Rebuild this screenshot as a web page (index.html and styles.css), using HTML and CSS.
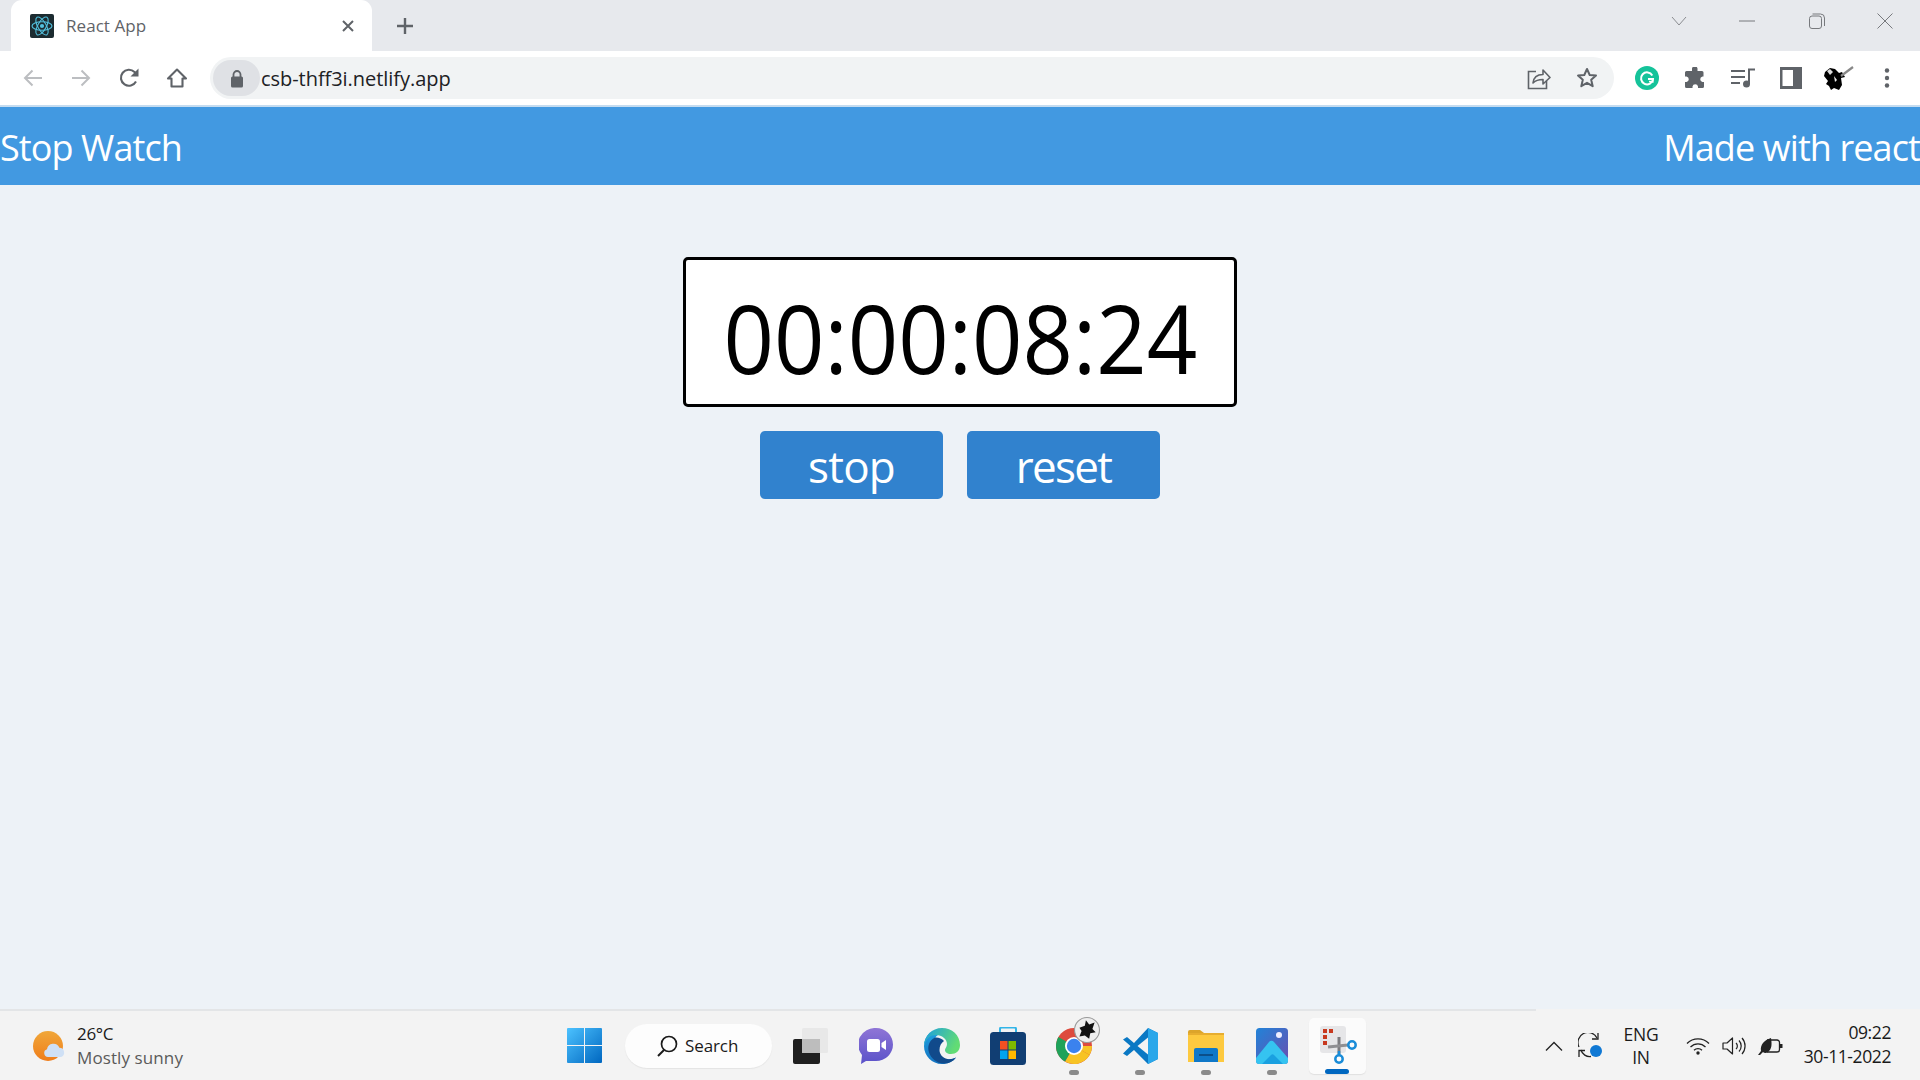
FILE: index.html
```html
<!DOCTYPE html>
<html lang="en">
<head>
<meta charset="utf-8">
<title>React App</title>
<link rel="stylesheet" href="styles.css">
</head>
<body>
<div class="screen">
  <div class="tabstrip">
    <div class="tab">
      <svg class="favicon" viewBox="0 0 24 24"><rect width="24" height="24" rx="2" fill="#1c2b30"/><g fill="none" stroke="#53c1de" stroke-width="1.1"><ellipse cx="12" cy="12" rx="10" ry="4.2"/><ellipse cx="12" cy="12" rx="10" ry="4.2" transform="rotate(60 12 12)"/><ellipse cx="12" cy="12" rx="10" ry="4.2" transform="rotate(120 12 12)"/></g><circle cx="12" cy="12" r="2.1" fill="#53c1de"/></svg>
      <span class="tab-title">React App</span>
      <svg class="tab-close" viewBox="0 0 14 14"><path d="M2 2l10 10M12 2L2 12" stroke="#5f6368" stroke-width="2" fill="none"/></svg>
    </div>
    <div class="new-tab"><svg width="20" height="20" viewBox="0 0 20 20"><path d="M10 2v16M2 10h16" stroke="#5f6368" stroke-width="2.4"/></svg></div>
    <div class="window-controls">
      <div class="win-btn"><svg width="16" height="10" viewBox="0 0 16 10"><path d="M1 1l7 8 7-8" stroke="#8a8c90" fill="none"/></svg></div>
      <div class="win-btn win-btn-min"><svg width="16" height="2" viewBox="0 0 16 2"><path d="M0 1h16" stroke="#77797d"/></svg></div>
      <div class="win-btn"><svg width="16" height="16" viewBox="0 0 16 16"><rect x=".5" y="3" width="12" height="12.5" rx="2.5" fill="none" stroke="#77797d"/><path d="M3.5 1h8a4 4 0 0 1 4 4v8" fill="none" stroke="#77797d"/></svg></div>
      <div class="win-btn"><svg width="16" height="16" viewBox="0 0 16 16"><path d="M.5.5l15 15M15.500.5l-15 15" stroke="#77797d"/></svg></div>
    </div>
  </div>

  <div class="toolbar">
    <div class="tool"><svg width="22" height="20" viewBox="0 0 22 20"><path d="M20 10H3M10.500 2.500L3 10l7.500 7.500" stroke="#bcbec1" stroke-width="2" fill="none"/></svg></div>
    <div class="tool"><svg width="22" height="20" viewBox="0 0 22 20"><path d="M2 10h17M11.500 2.500L19 10l-7.500 7.500" stroke="#bcbec1" stroke-width="2" fill="none"/></svg></div>
    <div class="tool"><svg width="22" height="22" viewBox="0 0 22 22"><path d="M18 14.500A8 8 0 1 1 16.500 5L19 7.500" stroke="#5f6368" stroke-width="2.100" fill="none"/><path d="M20.500 1.500v8h-8z" fill="#5f6368"/></svg></div>
    <div class="tool"><svg width="22" height="22" viewBox="0 0 22 22"><path d="M11 2.500L2 11.500h3.500v8h11v-8H20z" stroke="#5f6368" stroke-width="2.100" fill="none" stroke-linejoin="round"/></svg></div>
    <div class="omnibox">
      <div class="lock-pill"><svg width="14" height="19" viewBox="0 0 14 19"><path d="M3.500 8V5.500a3.500 3.500 0 0 1 7 0V8" stroke="#5f6368" stroke-width="1.800" fill="none"/><rect x="1" y="7.500" width="12" height="11" rx="1.500" fill="#5f6368"/></svg></div>
      <span class="url">csb-thff3i.netlify.app</span>
      <div class="tool omni-end"><svg width="24" height="24" viewBox="0 0 24 24"><path d="M9 5.500H1.500V22.500H19.500V15" stroke="#5f6368" stroke-width="1.600" fill="none"/><path d="M6 17c.500-5 4-8.500 10-8.500V4l7 7.500-7 6.500v-4.500c-4 0-7.500 1-10 3.500z" stroke="#5f6368" stroke-width="1.600" fill="none" stroke-linejoin="round"/></svg></div>
      <div class="tool"><svg width="22" height="22" viewBox="0 0 22 22"><path d="M11 2l2.700 6 6.300.600-4.800 4.200 1.500 6.400L11 15.800l-5.700 3.400 1.500-6.400L2 8.600 8.300 8z" stroke="#5f6368" stroke-width="2" fill="none" stroke-linejoin="round"/></svg></div>
    </div>
    <div class="tool ext-first"><svg width="24" height="24" viewBox="0 0 24 24"><circle cx="12" cy="12" r="12" fill="#15c39a"/><path d="M17.300 9.500A6 6 0 1 0 18 13h-5" stroke="#fff" stroke-width="2" fill="none"/><path d="M14 15.500l3.800.300.200-3.600" stroke="#fff" stroke-width="1.600" fill="none"/></svg></div>
    <div class="tool"><svg width="22" height="22" viewBox="0 0 22 22"><path d="M8 1.500a2.800 2.800 0 0 1 5.500 0V4h4.500a1.500 1.500 0 0 1 1.500 1.500V9.500h-1a2.800 2.800 0 0 0 0 5.500h1.500v4.500A1.500 1.500 0 0 1 18.500 21H14v-1.500a2.800 2.800 0 0 0-5.500 0V21H2.500A1.500 1.500 0 0 1 1 19.500V15h1.500a2.800 2.800 0 0 0 0-5.500H1V5.500A1.500 1.500 0 0 1 2.500 4H8z" fill="#5f6368"/></svg></div>
    <div class="tool"><svg width="24" height="20" viewBox="0 0 24 20"><path d="M0 3h14M0 9h14M0 15h9" stroke="#5f6368" stroke-width="2"/><path d="M18 16V1.500h6" stroke="#5f6368" stroke-width="2" fill="none"/><circle cx="15.500" cy="16" r="3.500" fill="#5f6368"/></svg></div>
    <div class="tool"><svg width="22" height="22" viewBox="0 0 22 22"><rect width="22" height="22" fill="#5f6368"/><rect x="2.500" y="3" width="10.500" height="16" fill="#fff"/></svg></div>
    <div class="tool"><svg width="30" height="26" viewBox="0 0 30 26"><path d="M1 7l5-4 5 1 4 4 3-1 3 5-4 1 1 7-3 5-5-2-3 2-2-4-3-2 2-3-4-5z" fill="#000"/><path d="M17 11l12-9" stroke="#888" stroke-width="2.200"/><path d="M3 6l3-2 3 3-3 3z" fill="#ddd"/><path d="M10 11l3 4-2 2z" fill="#eee"/></svg></div>
    <div class="tool"><svg width="6" height="20" viewBox="0 0 6 20"><circle cx="3" cy="2.500" r="2.200" fill="#5f6368"/><circle cx="3" cy="10" r="2.200" fill="#5f6368"/><circle cx="3" cy="17.500" r="2.200" fill="#5f6368"/></svg></div>
  </div>

  <header class="app-bar">
    <span>Stop Watch</span>
    <span>Made with react</span>
  </header>

  <main class="app-main">
    <div class="timer"><span class="timer-digits">00:00:08:24</span></div>
    <div class="actions">
      <button class="btn btn-stop">stop</button>
      <button class="btn btn-reset">reset</button>
    </div>
  </main>

  <footer class="taskbar">
    <div class="weather">
      <svg class="weather-icon" width="33" height="30" viewBox="0 0 33 30"><defs><linearGradient id="sun" x1="0" y1="0" x2="0" y2="1"><stop offset="0" stop-color="#f0a73a"/><stop offset="1" stop-color="#ef7d1a"/></linearGradient></defs><circle cx="15" cy="15" r="15" fill="url(#sun)"/><path d="M15 26a4 4 0 0 1-1-7.800 6.500 6.500 0 0 1 12.400-1.500A4.800 4.800 0 0 1 28 26z" fill="#cfe0f5"/></svg>
      <div class="weather-text"><span class="temp">26°C</span><span class="cond">Mostly sunny</span></div>
    </div>
    <svg class="start" width="35" height="35" viewBox="0 0 35 35"><defs><linearGradient id="win" x1="0" y1="0" x2="1" y2="1"><stop offset="0" stop-color="#4cc2ff"/><stop offset="1" stop-color="#0067c0"/></linearGradient></defs><path d="M1 0h16v17H0V1a1 1 0 0 1 1-1zM18 0h16a1 1 0 0 1 1 1v16H18zM0 18h17v17H1a1 1 0 0 1-1-1zM18 18h17v16a1 1 0 0 1-1 1H18z" fill="url(#win)"/></svg>
    <div class="search">
      <svg width="24" height="24" viewBox="0 0 24 24"><circle cx="14" cy="10" r="7.500" stroke="#1a1a1a" stroke-width="1.700" fill="none"/><path d="M9 16l-6 6" stroke="#1a1a1a" stroke-width="2"/></svg>
      <span>Search</span>
    </div>
    <div class="apps">
      <div class="app"><svg width="35" height="36" viewBox="0 0 35 36"><rect y="11" width="27" height="25" rx="2" fill="#1f1f1f"/><rect x="9" width="26" height="25" rx="1.500" fill="#e8e8e8"/><rect x="9" y="11" width="18" height="14" fill="#bdbdbd"/></svg></div>
      <div class="app"><svg width="34" height="36" viewBox="0 0 34 36"><defs><linearGradient id="teams" x1="0" y1="0" x2="0" y2="1"><stop offset="0" stop-color="#8f75d6"/><stop offset="1" stop-color="#5a52c9"/></linearGradient></defs><path d="M17 0a17 16.500 0 0 1 0 33H7l-5 3 1-9A17 16.500 0 0 1 17 0z" fill="url(#teams)"/><rect x="8" y="11" width="13" height="13" rx="2.500" fill="#fff"/><path d="M22.500 15l4.500-3v10l-4.500-3z" fill="#fff"/></svg></div>
      <div class="app"><svg width="36" height="36" viewBox="0 0 36 36"><defs><linearGradient id="edge1" x1="0" y1="0" x2="0" y2="1"><stop offset="0" stop-color="#1e9fe0"/><stop offset="1" stop-color="#1473c0"/></linearGradient><linearGradient id="edge2" x1="0" y1="0" x2="1" y2=".4"><stop offset="0" stop-color="#1b9de2"/><stop offset="1" stop-color="#62dc74"/></linearGradient></defs><path d="M6 4.500C2 8 0 13 0 18c0 10 8 18 18 18 6 0 11-2.500 14-6.500-8 4-17 1-20-5C9 18 9 10 14 7z" fill="url(#edge1)"/><path d="M0 18C0 8 8 0 18 0c10 0 18 7 18 17 0 6-4 9-9 9-4 0-6-2-6-4 0-2 2-3 2-6 0-5-5-9-11-9-5 0-10 3-12 11z" fill="url(#edge2)"/><path d="M11 9.500c-6 3-8 9-6 15 2 6 8 11 15 11 5 0 9-2 12-6-3 1.500-6 2-8.500 1.500-5-1-8-5-8-9 0-4 1.500-7 4.500-9-2-2.500-6-4-9-3.500z" fill="#114a8b"/></svg></div>
      <div class="app"><svg width="36" height="38" viewBox="0 0 36 38"><path d="M10 6V2a1.500 1.500 0 0 1 1.500-1.500h13A1.500 1.500 0 0 1 26 2v4" stroke="#33b5e8" stroke-width="2" fill="none"/><rect y="5" width="36" height="33" rx="3.500" fill="#113e73"/><rect x="10" y="14" width="7.500" height="8.500" fill="#f25022"/><rect x="18.500" y="14" width="7.500" height="8.500" fill="#7fba00"/><rect x="10" y="23.500" width="7.500" height="8.500" fill="#00a4ef"/><rect x="18.500" y="23.500" width="7.500" height="8.500" fill="#ffb900"/></svg></div>
      <div class="app app-open">
        <svg width="36" height="44" viewBox="0 0 36 44"><circle cx="18" cy="22" r="18" fill="#dd4b3e"/><path d="M18 22L33.600 31A18 18 0 0 1 9 37.600z" fill="#f7c325"/><path d="M18 22L9 37.600A18 18 0 0 1 2.400 13z" fill="#1fa25a"/><path d="M18 22H36A18 18 0 0 1 33.600 31z" fill="#f7c325"/><circle cx="18" cy="22" r="9" fill="#fff"/><circle cx="18" cy="22" r="7.200" fill="#3b82ee"/></svg>
        <svg class="chrome-badge" width="26" height="26" viewBox="0 0 24 24"><circle cx="12" cy="12" r="11.500" fill="#eee" stroke="#999"/><path d="M5 10l5-2 1-5 3 4 5-2-2 6 3 3-5 1-1 5-4-3-5 1 2-5z" fill="#111"/></svg>
      </div>
      <div class="app app-open"><svg width="36" height="36" viewBox="0 0 36 36"><path d="M26 0l10 5v26l-10 5-14-14-7 6-4-2.500L8.500 18 1 11.500 5 9l7 6z" fill="#0a78c4"/><path d="M26 0l10 5v26l-10 5z" fill="#2aa7ea"/><path d="M26 9.500L15.500 18 26 26.500z" fill="#f3f3f3"/></svg></div>
      <div class="app app-open"><svg width="36" height="32" viewBox="0 0 36 32"><path d="M0 2a2 2 0 0 1 2-2h10l4 3H0z" fill="#dca42a"/><path d="M0 3h36v29H0z" fill="#fdc93f"/><path d="M0 3h36v2H0z" fill="#e7ad2f"/><path d="M6 32V20a2 2 0 0 1 2-2h20a2 2 0 0 1 2 2v12z" fill="#0f78c8"/><path d="M11 25h14" stroke="#0b4f8a" stroke-width="2"/></svg></div>
      <div class="app app-open"><svg width="32" height="36" viewBox="0 0 32 36"><defs><linearGradient id="photo" x1="0" y1="0" x2="1" y2="1"><stop offset="0" stop-color="#2183d8"/><stop offset="1" stop-color="#6a4fb0"/></linearGradient></defs><rect width="32" height="36" rx="3.500" fill="url(#photo)"/><circle cx="23" cy="7" r="3" fill="#eef"/><path d="M0 30l13-16a3 3 0 0 1 5 0l14 16v3a3 3 0 0 1-3 3H3a3 3 0 0 1-3-3z" fill="#35c3f0"/><path d="M6 36l9-9a2 2 0 0 1 3 0l9 9z" fill="#1aa0e0"/></svg></div>
      <div class="app app-active">
        <svg width="38" height="42" viewBox="0 0 38 42"><rect x="1" y="3" width="26" height="27" rx="3" fill="#e6e6e8"/><path d="M4 6h4v4H4zM10 6h4v4h-4zM4 12h4v4H4zM4 18h4v4H4z" fill="#c8391f"/><path d="M20 14v17" stroke="#7c7c80" stroke-width="3"/><path d="M9 24l20-2" stroke="#8f8f92" stroke-width="3"/><circle cx="33" cy="22" r="3.700" fill="none" stroke="#1a8cd8" stroke-width="2.500"/><circle cx="20" cy="36" r="3.700" fill="none" stroke="#1a8cd8" stroke-width="2.500"/><path d="M20 28v4.500" stroke="#1a8cd8" stroke-width="2.500"/></svg>
      </div>
    </div>
    <div class="tray">
      <div class="tray-slot"><svg width="18" height="10" viewBox="0 0 18 10"><path d="M1 9.500l8-8 8 8" stroke="#222" stroke-width="1.300" fill="none"/></svg></div>
      <div class="tray-slot"><svg width="24" height="26" viewBox="0 0 24 26"><path d="M1 14A10 10 0 0 1 19 5" stroke="#222" stroke-width="1.300" fill="none"/><path d="M20 0v6h-6" stroke="#222" stroke-width="1.300" fill="none"/><path d="M3 17a9 9 0 0 0 10 6.500" stroke="#222" stroke-width="1.300" fill="none"/><path d="M1 24v-6.500h6" stroke="#222" stroke-width="1.300" fill="none"/><circle cx="18" cy="18" r="6" fill="#0f78d4"/></svg></div>
      <div class="tray-lang"><span>ENG</span><span>IN</span></div>
      <div class="tray-slot tray-gap"><svg width="24" height="18" viewBox="0 0 24 18"><path d="M1 6.500a15.500 15.500 0 0 1 22 0M4.500 10a10.500 10.500 0 0 1 15 0M8 13.200a5.700 5.700 0 0 1 8 0" stroke="#222" stroke-width="1.300" fill="none"/><circle cx="12" cy="16" r="1.700" fill="#222"/></svg></div>
      <div class="tray-slot"><svg width="24" height="20" viewBox="0 0 24 20"><path d="M1 7h4l5.500-5v16L5 13H1z" stroke="#222" stroke-width="1.200" fill="none" stroke-linejoin="round"/><path d="M14 7a4 4 0 0 1 0 6M17 4.500a8 8 0 0 1 0 11M20 2a12 12 0 0 1 0 16" stroke="#222" stroke-width="1.200" fill="none"/></svg></div>
      <div class="tray-slot"><svg width="25" height="18" viewBox="0 0 25 18"><path d="M9 3h10a2.500 2.500 0 0 1 2.500 2.500v7A2.500 2.500 0 0 1 19 15H9" fill="none" stroke="#222" stroke-width="1.300"/><path d="M22 7h2.500v4H22z" fill="#222"/><path d="M0 18l3-4C2 8 6 3 13 1c1 6 1 11-3 14-2 1.500-4 1-5 0l-3 3z" fill="#222"/></svg></div>
      <div class="clock"><span>09:22</span><span>30-11-2022</span></div>
    </div>
  </footer>
</div>
</body>
</html>
```

FILE: styles.css
```css
* { box-sizing: border-box; }
html, body { margin: 0; height: 100%; }
body { font-family: "Open Sans", "Liberation Sans", sans-serif; background: #edf2f7; overflow: hidden; }
svg { display: block; flex: none; }

.screen { height: 1080px; display: flex; flex-direction: column; }

.tabstrip { height: 51px; flex: none; background: #e7e9ed; display: flex; align-items: flex-end; padding-left: 11px; }
.tab { width: 361px; height: 51px; background: #fff; border-radius: 11px 11px 0 0; display: flex; align-items: center; padding: 0 17px 0 19px; }
.favicon { width: 24px; height: 24px; }
.tab-title { margin-left: 12px; font-size: 17px; letter-spacing: .05px; color: #5f6368; flex: 1; }
.tab-close { width: 14px; height: 14px; }
.new-tab { width: 66px; height: 51px; display: flex; align-items: center; justify-content: center; }
.window-controls { margin-left: auto; height: 51px; display: flex; align-items: center; padding: 0 0 9px 0; margin-right: 1px; }
.win-btn { width: 68px; display: flex; justify-content: center; }
.win-btn-min { margin-right: 2px; }

.toolbar { height: 54px; flex: none; background: #fff; display: flex; align-items: center; padding: 0 9px; border-bottom: 0; }
.tool { width: 48px; height: 42px; flex: none; display: flex; align-items: center; justify-content: center; }
.ext-first { margin-left: 9px; }
.omnibox { flex: 1; margin-left: 9px; height: 42px; border-radius: 21px; background: #f1f3f4; display: flex; align-items: center; padding: 0 3px 0 3px; }
.lock-pill { width: 47px; height: 36px; border-radius: 18px; background: #dfe1e5; display: flex; align-items: center; justify-content: center; flex: none; }
.url { margin-left: 1px; font-size: 20px; letter-spacing: -.05px; color: #202124; flex: 1; }

.app-bar { height: 80px; flex: none; background: #4299e1; border-top: 2px solid #c5dcf0; color: #fff; display: flex; align-items: center; justify-content: space-between; font-size: 36px; letter-spacing: -.9px; padding-top: 3px; }

.app-main { flex: 1; display: flex; flex-direction: column; align-items: center; padding-top: 72px; gap: 24px; }
.timer { width: 554px; height: 150px; background: #fff; border: 3px solid #000; border-radius: 5px; color: #000; font-size: 96px; line-height: 1; display: flex; align-items: center; justify-content: center; padding: 9px 0 0 0; }
.timer-digits { display: block; flex: none; transform: scaleX(.92); }
.actions { display: flex; gap: 24px; }
.btn { height: 68px; border: 0; border-radius: 5px; background: #3182ce; color: #fff; font-family: inherit; font-size: 44px; line-height: 1; letter-spacing: -.8px; padding: 1px 0 0; }
.btn-stop { width: 183px; }
.btn-reset { width: 193px; letter-spacing: -1.700px; }

.taskbar { height: 71px; flex: none; background: linear-gradient(#e3e5e7, #e3e5e7) 0 0 / 1536px 2px no-repeat, #f3f3f3; display: flex; align-items: center; padding-top: 2px; }
.weather { width: 567px; flex: none; display: flex; align-items: center; padding-left: 33px; gap: 11px; }
.weather-text { display: flex; flex-direction: column; }
.temp { font-size: 17px; line-height: 24px; color: #1a1a1a; letter-spacing: -.3px; }
.cond { font-size: 17px; line-height: 24px; color: #5a5a5a; letter-spacing: .1px; }
.start { margin-right: 23px; }
.search { width: 147px; height: 44px; flex: none; border-radius: 22px; background: #fdfdfd; box-shadow: 0 1px 1px #e4e4e4; display: flex; align-items: center; padding-left: 30px; gap: 6px; font-size: 17px; letter-spacing: -.1px; color: #1a1a1a; margin-right: 5px; }
.apps { display: flex; align-items: center; }
.app { width: 66px; height: 56px; flex: none; position: relative; display: flex; align-items: center; justify-content: center; }
.app-open::after { content: ""; position: absolute; left: 28px; bottom: -1px; width: 10px; height: 5px; border-radius: 3px; background: #8a8a8a; }
.chrome-badge { position: absolute; left: 33px; top: -1px; }
.app-active { margin-left: 4px; width: 57px; background: #fbfbfb; border-radius: 5px; box-shadow: 0 1px 1px #e0e0e0; margin-right: 4px; padding-bottom: 4px; }
.app-active::after { content: ""; position: absolute; left: 16px; bottom: 0; width: 24px; height: 5px; border-radius: 3px; background: #0067c0; }
.tray { margin-left: auto; display: flex; align-items: center; color: #1a1a1a; }
.tray-slot { width: 36px; display: flex; align-items: center; justify-content: center; }
.tray-gap { margin-left: 6px; }
.tray-lang { width: 66px; display: flex; flex-direction: column; align-items: center; font-size: 17.500px; line-height: 23px; letter-spacing: -.2px; }
.clock { width: 132px; padding: 0 29px 3px 0; display: flex; flex-direction: column; align-items: flex-end; font-size: 17.500px; line-height: 24px; letter-spacing: -.4px; }
```
